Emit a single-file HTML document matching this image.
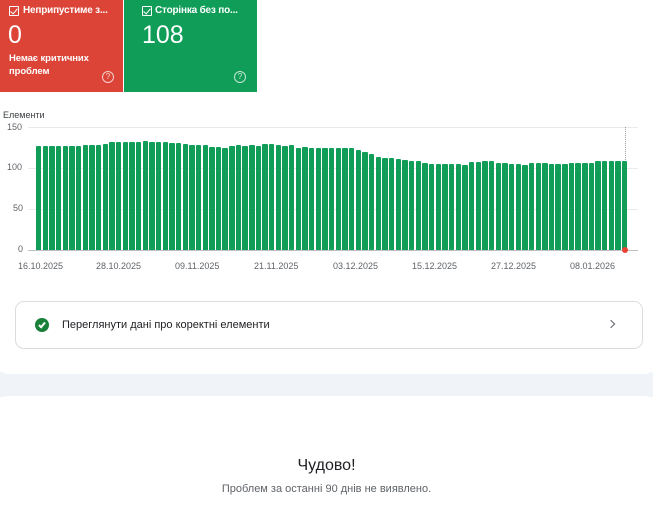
<!DOCTYPE html>
<html><head><meta charset="utf-8"><style>
*{margin:0;padding:0;box-sizing:border-box}
body{width:653px;height:512px;overflow:hidden;background:#fff;font-family:"Liberation Sans",sans-serif;position:relative}
.card{position:absolute;top:0;height:92px;color:#fff}
.cb{position:absolute;top:6px;width:10px;height:10px;border:1.3px solid #fff;border-radius:1px}
.cb:after{content:"";position:absolute;left:2px;top:0px;width:3px;height:6px;border-right:1.3px solid #fff;border-bottom:1.3px solid #fff;transform:rotate(40deg)}
.t{position:absolute;top:5px;font-size:10px;font-weight:bold;letter-spacing:-0.2px}
.n{position:absolute;top:21px;font-size:25px}
.q{position:absolute;top:71px;width:12px;height:12px;border:1.2px solid rgba(255,255,255,.75);border-radius:50%;font-size:8px;text-align:center;line-height:10px;color:rgba(255,255,255,.8)}
.ax{position:absolute;font-size:9px;color:#5f6368}
</style></head><body>
<div class="card" style="left:0;width:123px;background:#db4437">
<div class="cb" style="left:9px"></div><div class="t" style="left:23px">Неприпустиме з...</div>
<div class="n" style="left:8px">0</div>
<div style="position:absolute;left:9px;top:52px;font-size:9.5px;font-weight:bold;line-height:13px;letter-spacing:-0.1px">Немає критичних<br>проблем</div>
<div class="q" style="left:102px">?</div>
</div>
<div class="card" style="left:124px;width:133px;background:#0f9d58">
<div class="cb" style="left:18px"></div><div class="t" style="left:31px">Сторінка без по...</div>
<div class="n" style="left:18px">108</div>
<div class="q" style="left:110px">?</div>
</div>
<div class="ax" style="left:3px;top:110px;color:#3c4043">Елементи</div>
<div class="ax" style="left:7px;top:122px">150</div>
<div class="ax" style="left:7px;top:162px">100</div>
<div class="ax" style="left:13px;top:203px">50</div>
<div class="ax" style="left:18px;top:244px">0</div>
<div style="position:absolute;left:28px;top:127px;width:610px;height:1px;background:#e8eaed"></div>
<div style="position:absolute;left:28px;top:168px;width:610px;height:1px;background:#e8eaed"></div>
<div style="position:absolute;left:28px;top:209px;width:610px;height:1px;background:#e8eaed"></div>
<div style="position:absolute;left:28px;top:250px;width:610px;height:1px;background:#bdc1c6"></div>
<div style="position:absolute;left:625px;top:127px;width:0;height:123px;border-left:1px dotted #9aa0a6"></div>
<div id="bars"></div>
<div style="position:absolute;left:622px;top:247px;width:6px;height:6px;border-radius:50%;background:#ea4335"></div>
<div class="ax" style="left:18px;top:261px">16.10.2025</div>
<div class="ax" style="left:96px;top:261px">28.10.2025</div>
<div class="ax" style="left:175px;top:261px">09.11.2025</div>
<div class="ax" style="left:254px;top:261px">21.11.2025</div>
<div class="ax" style="left:333px;top:261px">03.12.2025</div>
<div class="ax" style="left:412px;top:261px">15.12.2025</div>
<div class="ax" style="left:491px;top:261px">27.12.2025</div>
<div class="ax" style="left:570px;top:261px">08.01.2026</div>
<div style="position:absolute;left:15px;top:301px;width:628px;height:48px;border:1px solid #dadce0;border-radius:9px">
<div style="position:absolute;left:19px;top:16px;width:14px;height:14px;border-radius:50%;background:#188038"></div>
<div style="position:absolute;left:23.5px;top:18.5px;width:4px;height:7px;border-right:2px solid #fff;border-bottom:2px solid #fff;transform:rotate(40deg)"></div>
<div style="position:absolute;left:46px;top:17px;font-size:11px;color:#202124">Переглянути дані про коректні елементи</div>
<div style="position:absolute;left:592px;top:19px;width:6px;height:6px;border-right:1.5px solid #5f6368;border-top:1.5px solid #5f6368;transform:rotate(45deg)"></div>
</div>
<div style="position:absolute;left:0;top:372px;width:653px;height:25px;background:#f0f4f9"></div>
<div style="position:absolute;left:0;top:366px;width:653px;height:8px;background:#fff;border-radius:0 0 8px 8px"></div>
<div style="position:absolute;left:0;top:396px;width:653px;height:20px;background:#fff;border-radius:8px 8px 0 0"></div>
<div style="position:absolute;left:0;top:457px;width:653px;text-align:center;font-size:16px;color:#202124">Чудово!</div>
<div style="position:absolute;left:0;top:483px;width:653px;text-align:center;font-size:11px;color:#5f6368">Проблем за останні 90 днів не виявлено.</div>
<script>
var v=[127,127,127,127,127,127,127,128,128,128,129,132,132,132,132,132,133,132,132,132,130,130,129,128,128,128,126,126,124,127,128,127,128,127,129,129,128,127,128,125,126,124,124,124,124,124,124,124,122,119,117,114,112,112,111,110,109,108,106,105,105,105,105,105,104,107,107,108,108,106,106,105,105,104,106,106,106,105,105,105,106,106,106,106,108,108,109,108,109,109,108,110];
v=v.slice(0,89);var h='';
for(var i=0;i<89;i++){var x=36+i*6.66,hh=v[i]*0.82;h+='<div style="position:absolute;left:'+x.toFixed(2)+'px;top:'+(250-hh).toFixed(1)+'px;width:5.4px;height:'+hh.toFixed(1)+'px;background:#0f9d58;border-radius:1px 1px 0 0"></div>';}
document.getElementById('bars').innerHTML=h;
</script>
</body></html>
